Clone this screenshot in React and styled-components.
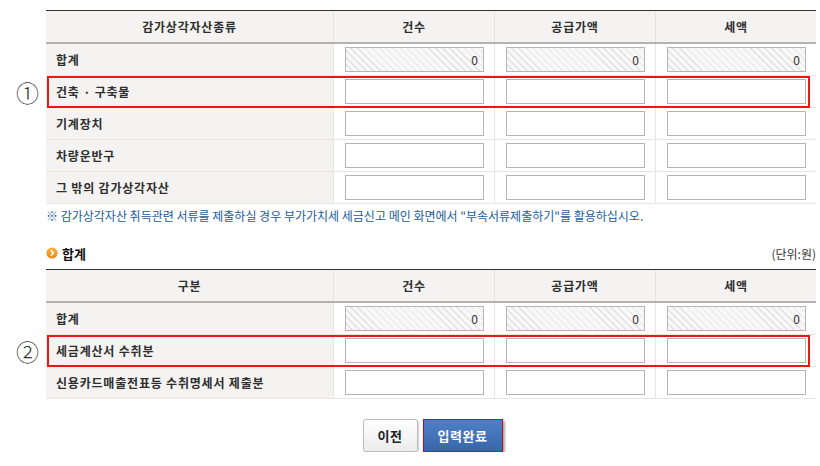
import React from 'react';
import styled, { createGlobalStyle, css } from 'styled-components';

const Global = createGlobalStyle`
  html, body { margin: 0; padding: 0; background: #fff; }
  body {
    font-family: "Noto Sans CJK KR", "Noto Sans", sans-serif;
    font-size: 12px;
    color: #333;
  }
`;

const Page = styled.div`
  width: 770px;
  padding: 10px 0 0 46px;
  display: flex;
  flex-direction: column;
`;

const Table = styled.div`
  display: flex;
  flex-direction: column;
  border-top: 1px solid #333;
`;

const Row = styled.div`
  position: relative;
  display: grid;
  grid-template-columns: 287px repeat(3, 161px);
  height: 31px;
  border-bottom: ${p => (p.$head ? '2px solid #b2b2b2' : '1px solid #e6e6e6')};
  ${p =>
    p.$marked &&
    css`
      &::after {
        content: '';
        position: absolute;
        left: 1px;
        top: 0;
        width: 763px;
        height: 32px;
        box-sizing: border-box;
        border: 2px solid #f01414;
        pointer-events: none;
      }
    `}
`;

const Marker = styled.span`
  position: absolute;
  left: -30px;
  top: 50%;
  transform: translateY(-50%);
  font-family: "Noto Sans CJK KR", sans-serif;
  font-size: 23px;
  font-weight: 300;
  line-height: 1;
  color: #333;
`;

const HeadCell = styled.div`
  display: flex;
  align-items: center;
  justify-content: center;
  background: #f4f3f1;
  font-weight: 700;
  letter-spacing: 0.8px;
  color: #2e2e2e;
  & + & { border-left: 1px solid #e3e3e3; }
`;

const LabelCell = styled.div`
  display: flex;
  align-items: center;
  padding-left: 10px;
  background: #f4f3f1;
  font-weight: 700;
  letter-spacing: 0.8px;
  color: #2e2e2e;
`;

const DataCell = styled.div`
  display: flex;
  align-items: center;
  padding-left: 11px;
  background: #fff;
  border-left: 1px solid #e6e6e6;
`;

const Field = styled.input`
  box-sizing: border-box;
  width: 139px;
  height: 25px;
  margin: 0;
  border: 1px solid #b5b5b5;
  border-radius: 0;
  padding: 0 5px;
  outline: none;
  text-align: right;
  font-family: "Noto Sans CJK KR", "Noto Sans", sans-serif;
  font-size: 12px;
  color: #333;
  background: #fff;
  ${p =>
    p.readOnly &&
    css`
      background: repeating-linear-gradient(45deg, #f8f8f8 0 4px, #e2e2e2 4px 5px);
    `}
`;

const Note = styled.p`
  margin: 4px 0 0;
  line-height: 16px;
  color: #1a5c9c;
  letter-spacing: 0;
`;

const SectionHead = styled.div`
  display: flex;
  align-items: center;
  justify-content: space-between;
  height: 18px;
  margin-top: 20px;
  margin-bottom: 7px;
`;

const SectionTitle = styled.h3`
  display: flex;
  align-items: center;
  gap: 4px;
  margin: 0;
  font-size: 13px;
  font-weight: 700;
  color: #111;
`;

const Unit = styled.span`
  font-size: 12px;
  color: #333;
`;

const Buttons = styled.div`
  display: flex;
  justify-content: center;
  gap: 5px;
  margin-top: 20px;
  padding-left: 3px;
`;

const Button = styled.button`
  box-sizing: border-box;
  height: 33px;
  padding: 0;
  font-family: "Noto Sans CJK KR", "Noto Sans", sans-serif;
  font-size: 13px;
  font-weight: 700;
  letter-spacing: 0.5px;
  cursor: pointer;
  ${p =>
    p.$primary
      ? css`
          width: 80px;
          color: #fff;
          border: 1px solid #e00000;
          border-radius: 0;
          background: linear-gradient(#4f80c5, #3866ab);
          box-shadow: 2px 2px 2px rgba(0, 0, 0, 0.35);
        `
      : css`
          width: 55px;
          color: #222;
          border: 1px solid #bcbcbc;
          border-radius: 3px;
          background: linear-gradient(#ffffff, #ececec);
          box-shadow: 1px 1px 2px rgba(0, 0, 0, 0.2);
        `}
`;

const Bullet = () => (
  <svg width="12" height="12" viewBox="0 0 12 12">
    <defs>
      <linearGradient id="og" x1="0" y1="0" x2="0" y2="1">
        <stop offset="0" stopColor="#f9b540" />
        <stop offset="1" stopColor="#e7841a" />
      </linearGradient>
    </defs>
    <circle cx="6" cy="6" r="5.6" fill="url(#og)" />
    <path d="M4.8 3.4 L7.4 6 L4.8 8.6" fill="none" stroke="#fff" strokeWidth="1.6" />
  </svg>
);

const cols = ['건수', '공급가액', '세액'];

function DataRow({ label, total, marker }) {
  return (
    <Row $marked={!!marker}>
      {marker && <Marker>{marker}</Marker>}
      <LabelCell>{label}</LabelCell>
      {cols.map(c => (
        <DataCell key={c}>
          {total ? <Field readOnly value="0" /> : <Field defaultValue="" />}
        </DataCell>
      ))}
    </Row>
  );
}

function Grid({ first, rows }) {
  return (
    <Table>
      <Row $head>
        <HeadCell>{first}</HeadCell>
        {cols.map(c => (
          <HeadCell key={c}>{c}</HeadCell>
        ))}
      </Row>
      {rows.map(r => (
        <DataRow key={r.label} {...r} />
      ))}
    </Table>
  );
}

export default function App() {
  return (
    <>
      <Global />
      <Page>
        <Grid
          first="감가상각자산종류"
          rows={[
            { label: '합계', total: true },
            { label: '건축 · 구축물', marker: '①' },
            { label: '기계장치' },
            { label: '차량운반구' },
            { label: '그 밖의 감가상각자산' },
          ]}
        />
        <Note>
          ※ 감가상각자산 취득관련 서류를 제출하실 경우 부가가치세 세금신고 메인 화면에서 "부속서류제출하기"를 활용하십시오.
        </Note>
        <SectionHead>
          <SectionTitle>
            <Bullet />
            합계
          </SectionTitle>
          <Unit>(단위:원)</Unit>
        </SectionHead>
        <Grid
          first="구분"
          rows={[
            { label: '합계', total: true },
            { label: '세금계산서 수취분', marker: '②' },
            { label: '신용카드매출전표등 수취명세서 제출분' },
          ]}
        />
        <Buttons>
          <Button type="button">이전</Button>
          <Button type="button" $primary>
            입력완료
          </Button>
        </Buttons>
      </Page>
    </>
  );
}
